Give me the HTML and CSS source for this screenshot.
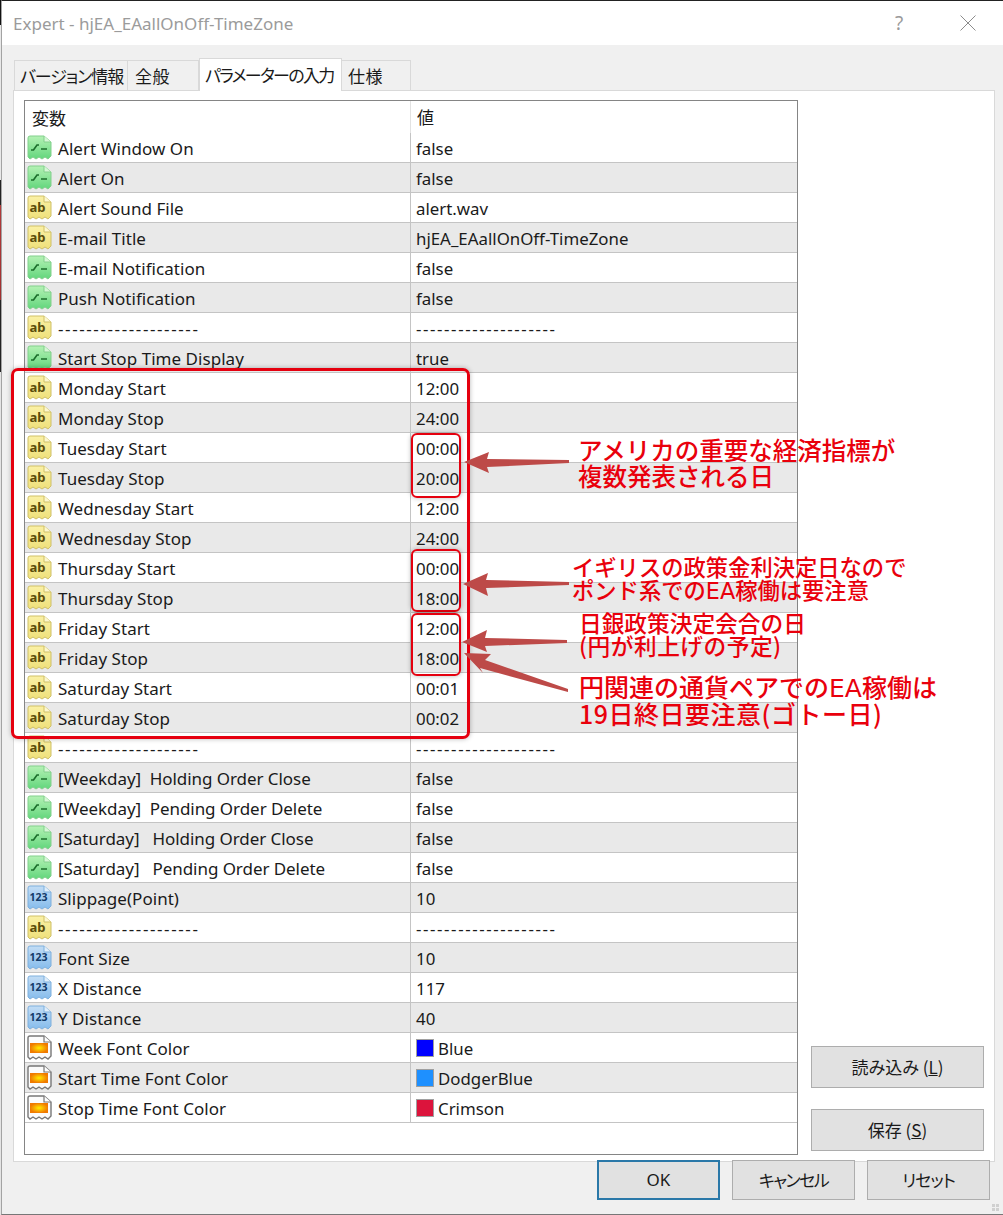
FILE: index.html
```html
<!DOCTYPE html>
<html lang="ja">
<head>
<meta charset="utf-8">
<title>Expert - hjEA_EAallOnOff-TimeZone</title>
<link rel="stylesheet" href="styles.css">
</head>
<body>
<svg class="defs" width="0" height="0" aria-hidden="true">
  <defs>
    <linearGradient id="g-green" x1="0" y1="0" x2="0" y2="1"><stop offset="0" stop-color="#b5f2b5"/><stop offset="1" stop-color="#62d67c"/></linearGradient>
    <linearGradient id="g-yellow" x1="0" y1="0" x2="0" y2="1"><stop offset="0" stop-color="#fbf1a6"/><stop offset="1" stop-color="#efe07a"/></linearGradient>
    <linearGradient id="g-blue" x1="0" y1="0" x2="0" y2="1"><stop offset="0" stop-color="#c3ddf5"/><stop offset="1" stop-color="#86bcec"/></linearGradient>
    <radialGradient id="g-orange"><stop offset="0.1" stop-color="#ffe000"/><stop offset="1" stop-color="#f07a00"/></radialGradient>
    <symbol id="i-bool" viewBox="0 0 25 25">
      <path class="sheet-green" d="M1 3Q1 1 3 1H17L24 7V21L21 24 18 22 15 24 12 22 9 24 6 22 3 24 1 22Z"/>
      <path class="fold-green" d="M17 1V7H24"/>
      <path class="mark-green" d="M4 15H6.5L10 10H12M14 14H20"/>
    </symbol>
    <symbol id="i-text" viewBox="0 0 25 25">
      <path class="sheet-yellow" d="M1 3Q1 1 3 1H17L24 7V21L21 24 18 22 15 24 12 22 9 24 6 22 3 24 1 22Z"/>
      <path class="fold-yellow" d="M17 1V7H24"/>
      <text class="ico-ab" x="2.5" y="16.5">ab</text>
    </symbol>
    <symbol id="i-num" viewBox="0 0 25 25">
      <path class="sheet-blue" d="M1 3Q1 1 3 1H17L24 7V21L21 24 18 22 15 24 12 22 9 24 6 22 3 24 1 22Z"/>
      <path class="fold-blue" d="M17 1V7H24"/>
      <text class="ico-num" x="2.5" y="16">123</text>
    </symbol>
    <symbol id="i-color" viewBox="0 0 25 25">
      <path class="sheet-color" d="M1 3Q1 1 3 1H17L24 7V21L21 24 18 22 15 24 12 22 9 24 6 22 3 24 1 22Z"/>
      <path class="fold-color" d="M17 1V7H24"/>
      <rect class="mark-color" x="3" y="8" width="18" height="10"/>
    </symbol>
  </defs>
</svg>

<div class="edge"></div>
<main class="window">
  <header class="titlebar">
    <span class="title">Expert - hjEA_EAallOnOff-TimeZone</span>
    <span class="help">?</span>
    <svg class="close" width="16" height="16" viewBox="0 0 16 16"><path d="M0.5 0.5L15.5 15.5M15.5 0.5L0.5 15.5"/></svg>
  </header>

  <nav class="tabs">
    <span class="tab tab-version">バージョン情報</span>
    <span class="tab tab-general">全般</span>
    <span class="tab tab-active">パラメーターの入力</span>
    <span class="tab tab-spec">仕様</span>
  </nav>

  <section class="panel">
    <div class="list">
      <div class="list-head"><span class="head-name">変数</span><span class="head-val">値</span></div>
      <div class="row"><span class="name"><svg class="ico"><use href="#i-bool"/></svg>Alert Window On</span><span class="val">false</span></div>
      <div class="row"><span class="name"><svg class="ico"><use href="#i-bool"/></svg>Alert On</span><span class="val">false</span></div>
      <div class="row"><span class="name"><svg class="ico"><use href="#i-text"/></svg>Alert Sound File</span><span class="val">alert.wav</span></div>
      <div class="row"><span class="name"><svg class="ico"><use href="#i-text"/></svg>E-mail Title</span><span class="val">hjEA_EAallOnOff-TimeZone</span></div>
      <div class="row"><span class="name"><svg class="ico"><use href="#i-bool"/></svg>E-mail Notification</span><span class="val">false</span></div>
      <div class="row"><span class="name"><svg class="ico"><use href="#i-bool"/></svg>Push Notification</span><span class="val">false</span></div>
      <div class="row"><span class="name dash"><svg class="ico"><use href="#i-text"/></svg>--------------------</span><span class="val dash">--------------------</span></div>
      <div class="row"><span class="name"><svg class="ico"><use href="#i-bool"/></svg>Start Stop Time Display</span><span class="val">true</span></div>
      <div class="row"><span class="name"><svg class="ico"><use href="#i-text"/></svg>Monday Start</span><span class="val">12:00</span></div>
      <div class="row"><span class="name"><svg class="ico"><use href="#i-text"/></svg>Monday Stop</span><span class="val">24:00</span></div>
      <div class="row"><span class="name"><svg class="ico"><use href="#i-text"/></svg>Tuesday Start</span><span class="val">00:00</span></div>
      <div class="row"><span class="name"><svg class="ico"><use href="#i-text"/></svg>Tuesday Stop</span><span class="val">20:00</span></div>
      <div class="row"><span class="name"><svg class="ico"><use href="#i-text"/></svg>Wednesday Start</span><span class="val">12:00</span></div>
      <div class="row"><span class="name"><svg class="ico"><use href="#i-text"/></svg>Wednesday Stop</span><span class="val">24:00</span></div>
      <div class="row"><span class="name"><svg class="ico"><use href="#i-text"/></svg>Thursday Start</span><span class="val">00:00</span></div>
      <div class="row"><span class="name"><svg class="ico"><use href="#i-text"/></svg>Thursday Stop</span><span class="val">18:00</span></div>
      <div class="row"><span class="name"><svg class="ico"><use href="#i-text"/></svg>Friday Start</span><span class="val">12:00</span></div>
      <div class="row"><span class="name"><svg class="ico"><use href="#i-text"/></svg>Friday Stop</span><span class="val">18:00</span></div>
      <div class="row"><span class="name"><svg class="ico"><use href="#i-text"/></svg>Saturday Start</span><span class="val">00:01</span></div>
      <div class="row"><span class="name"><svg class="ico"><use href="#i-text"/></svg>Saturday Stop</span><span class="val">00:02</span></div>
      <div class="row"><span class="name dash"><svg class="ico"><use href="#i-text"/></svg>--------------------</span><span class="val dash">--------------------</span></div>
      <div class="row"><span class="name tight"><svg class="ico"><use href="#i-bool"/></svg>[Weekday]&nbsp; Holding Order Close</span><span class="val">false</span></div>
      <div class="row"><span class="name tight"><svg class="ico"><use href="#i-bool"/></svg>[Weekday]&nbsp; Pending Order Delete</span><span class="val">false</span></div>
      <div class="row"><span class="name tight"><svg class="ico"><use href="#i-bool"/></svg>[Saturday]&nbsp;&nbsp; Holding Order Close</span><span class="val">false</span></div>
      <div class="row"><span class="name tight"><svg class="ico"><use href="#i-bool"/></svg>[Saturday]&nbsp;&nbsp; Pending Order Delete</span><span class="val">false</span></div>
      <div class="row"><span class="name"><svg class="ico"><use href="#i-num"/></svg>Slippage(Point)</span><span class="val">10</span></div>
      <div class="row"><span class="name dash"><svg class="ico"><use href="#i-text"/></svg>--------------------</span><span class="val dash">--------------------</span></div>
      <div class="row"><span class="name"><svg class="ico"><use href="#i-num"/></svg>Font Size</span><span class="val">10</span></div>
      <div class="row"><span class="name"><svg class="ico"><use href="#i-num"/></svg>X Distance</span><span class="val">117</span></div>
      <div class="row"><span class="name"><svg class="ico"><use href="#i-num"/></svg>Y Distance</span><span class="val">40</span></div>
      <div class="row"><span class="name"><svg class="ico"><use href="#i-color"/></svg>Week Font Color</span><span class="val"><i class="swatch swatch-blue"></i>Blue</span></div>
      <div class="row"><span class="name"><svg class="ico"><use href="#i-color"/></svg>Start Time Font Color</span><span class="val"><i class="swatch swatch-dodger"></i>DodgerBlue</span></div>
      <div class="row"><span class="name"><svg class="ico"><use href="#i-color"/></svg>Stop Time Font Color</span><span class="val"><i class="swatch swatch-crimson"></i>Crimson</span></div>
    </div>
    <aside class="side">
      <button class="btn btn-side">読み込み (<u>L</u>)</button>
      <button class="btn btn-side">保存 (<u>S</u>)</button>
    </aside>
  </section>

  <footer class="footer">
    <button class="btn btn-foot btn-ok">OK</button>
    <button class="btn btn-foot btn-cancel">キャンセル</button>
    <button class="btn btn-foot btn-reset">リセット</button>
  </footer>
  <svg class="grip" width="8" height="8" viewBox="0 0 8 8"><path d="M0 0h3v3H0zM4 0h3v3H4zM0 4h3v3H0zM4 4h3v3H4z"/></svg>
</main>

<div class="box box-all"></div>
<div class="box box-tue"></div>
<div class="box box-thu"></div>
<div class="box box-fri"></div>

<svg class="arrows" width="1003" height="1215" viewBox="0 0 1003 1215">
  <path d="M464 462L489 452 487 459 569 460V463L487 467 489 473Z"/>
  <path d="M463 584L488 573 486 580 569 582V585L486 588 488 596Z"/>
  <path d="M462 642L487 630 485 638 567 640V643L485 646 487 652Z"/>
  <path d="M464 653L491 654 485 660 568 689V692L480 668 483 673Z"/>
</svg>

<p class="note note-1"><span>アメリカの重要な経済指標が</span><span>複数発表される日</span></p>
<p class="note note-2"><span>イギリスの政策金利決定日なので</span><span>ポンド系での<b class="ea">EA</b>稼働は要注意</span></p>
<p class="note note-3"><span>日銀政策決定会合の日</span><span class="spaced">(円が利上げの予定)</span></p>
<p class="note note-4"><span>円関連の通貨ペアでの<b class="ea">EA</b>稼働は</span><span class="spaced">19日終日要注意(ゴトー日)</span></p>
</body>
</html>
```

FILE: styles.css
```css
* { box-sizing: border-box; }

html, body {
  margin: 0;
  padding: 0;
}

body {
  position: relative;
  display: flex;
  width: 1003px;
  height: 1215px;
  overflow: hidden;
  background: #f0f0f0;
  font-family: "Noto Sans", "Noto Sans CJK JP", sans-serif;
  font-size: 17px;
  color: #1a1a1a;
}

.defs { position: absolute; }

.edge {
  flex: 0 0 1px;
  background: linear-gradient(to bottom,
    #111 0, #111 25px, #e8e8e8 25px, #e8e8e8 180px, #222 180px, #222 205px,
    #b03a3a 205px, #a03030 300px, #222 300px, #222 372px,
    #e4e4e4 372px, #e4e4e4 1215px);
}

.window {
  position: relative;
  flex: 1;
  display: flex;
  flex-direction: column;
  min-width: 0;
  border-left: 1px solid #a3a3a3;
  border-top: 1px solid #222;
  border-bottom: 1px solid #777;
}

.titlebar {
  position: relative;
  display: flex;
  align-items: center;
  flex: 0 0 44px;
  padding-left: 11px;
  background: #fff;
}

.title {
  font-size: 17px;
  color: #9b9b9b;
}

.help {
  position: absolute;
  left: 893px;
  top: 9px;
  font-size: 19px;
  color: #9a9a9a;
}

.close {
  position: absolute;
  left: 958px;
  top: 14px;
}

.close path {
  fill: none;
  stroke: #8c8c8c;
  stroke-width: 1;
}

.tabs {
  display: flex;
  align-items: flex-end;
  height: 45px;
  padding-left: 12px;
  font-family: "Noto Sans CJK JP", sans-serif;
  font-feature-settings: "palt";
  font-size: 17px;
  white-space: nowrap;
}

.tab {
  display: flex;
  align-items: center;
  height: 30px;
  padding-left: 6px;
  background: #f0f0f0;
  border: 1px solid #d9d9d9;
  border-bottom: 0;
}

.tab-version { width: 114px; padding-left: 5px; letter-spacing: -1.1px; }
.tab-general { width: 71px; border-left: 0; padding-left: 7px; letter-spacing: 0.6px; }
.tab-active {
  position: relative;
  width: 143px;
  height: 33px;
  margin-bottom: -1px;
  padding-bottom: 2px;
  padding-left: 5px;
  letter-spacing: -1.7px;
  background: #fff;
  border-left: 1px solid #d9d9d9;
  z-index: 1;
}
.tab-spec { width: 69px; border-left: 0; padding-left: 6px; letter-spacing: 0.6px; }

.panel {
  display: flex;
  width: 982px;
  height: 1072px;
  margin-left: 11px;
  padding: 9px 10px 6px;
  background: #fff;
  border: 1px solid #d9d9d9;
}

.list {
  display: flex;
  flex-direction: column;
  flex: 0 0 774px;
  border: 1px solid #858585;
}

.list-head {
  display: flex;
  flex: 0 0 32px;
  align-items: center;
  font-family: "Noto Sans CJK JP", sans-serif;
}

.head-name {
  width: 385px;
  padding-left: 7px;
}

.head-val {
  flex: 1;
  padding-left: 6px;
  line-height: 32px;
  border-left: 1px solid #e2e2e2;
}

.row {
  display: flex;
  flex: 0 0 30px;
  border-bottom: 1px solid #c4c4c4;
}

.row:nth-child(odd) { background: #e9e9e9; }

.name {
  display: flex;
  align-items: center;
  flex: 0 0 385px;
  padding-left: 2px;
  padding-top: 1px;
  letter-spacing: 0.04px;
  white-space: pre;
}

.ico {
  flex: 0 0 25px;
  width: 25px;
  height: 25px;
  margin-top: -1px;
  margin-right: 6px;
}

.val {
  display: flex;
  align-items: center;
  flex: 1;
  padding-left: 5px;
  padding-top: 1px;
  font-size: 16.85px;
  border-left: 1px solid #c4c4c4;
}

.name.dash, .val.dash { letter-spacing: 1.6px; }
.name.tight { letter-spacing: -0.06px; }

.swatch {
  flex: 0 0 18px;
  width: 18px;
  height: 18px;
  margin-right: 4px;
  border: 1px solid #a0a0a0;
}

.swatch-blue { background: #0000ff; }
.swatch-dodger { background: #1e90ff; }
.swatch-crimson { background: #dc143c; }

.sheet-green { fill: url(#g-green); stroke: #82cf8c; }
.fold-green { fill: #d6f7d6; stroke: #82cf8c; }
.mark-green { fill: none; stroke: #1c6e2c; stroke-width: 1.7; }

.sheet-yellow { fill: url(#g-yellow); stroke: #cfc069; }
.fold-yellow { fill: #fdf8cf; stroke: #cfc069; }
.ico-ab {
  font-family: "Noto Sans", sans-serif;
  font-size: 13px;
  font-weight: 700;
  letter-spacing: 0;
  fill: #5a4c0a;
}

.sheet-blue { fill: url(#g-blue); stroke: #7fb0dd; }
.fold-blue { fill: #e0eefa; stroke: #7fb0dd; }
.ico-num {
  font-family: "Noto Sans", sans-serif;
  font-size: 10.5px;
  font-weight: 700;
  letter-spacing: 0;
  fill: #123a68;
}

.sheet-color { fill: #fbfbfb; stroke: #777; stroke-width: 1.4; }
.fold-color { fill: #fff; stroke: #777; stroke-width: 1.2; }
.mark-color { fill: url(#g-orange); }

.side {
  display: flex;
  flex-direction: column;
  justify-content: flex-end;
  gap: 21px;
  flex: 0 0 173px;
  margin-left: 13px;
  padding-bottom: 4px;
}

.btn {
  font-family: "Noto Sans CJK JP", "Noto Sans", sans-serif;
  font-feature-settings: "palt";
  font-size: 17px;
  color: #1a1a1a;
  background: #e1e1e1;
  border: 1px solid #adadad;
  padding: 0 0 2px;
}

.btn-side { height: 42px; }

.footer {
  display: flex;
  justify-content: flex-end;
  gap: 12px;
  margin-top: -2px;
  padding-right: 13px;
  position: relative;
}

.btn-foot {
  width: 123px;
  height: 40px;
}

.btn-ok {
  font-family: "Noto Sans", sans-serif;
  border: 2px solid #2a78a8;
}

.btn-cancel { letter-spacing: -1.5px; }
.btn-reset { letter-spacing: -1px; }

.grip {
  position: absolute;
  right: 3px;
  bottom: 2px;
}

.grip path { fill: #d0d0d0; }

.box {
  position: absolute;
  border-style: solid;
  border-color: #e5000f;
  box-shadow: 0 0 5px rgba(0, 0, 0, 0.28);
  pointer-events: none;
}

.box-all { left: 11px; top: 368px; width: 459px; height: 371px; border-width: 3px; border-radius: 7px; }
.box-tue { left: 411px; top: 433px; width: 50px; height: 65px; border-width: 2px; border-radius: 6px; }
.box-thu { left: 411px; top: 549px; width: 50px; height: 63px; border-width: 2px; border-radius: 6px; }
.box-fri { left: 411px; top: 613px; width: 50px; height: 63px; border-width: 2px; border-radius: 6px; }

.arrows {
  position: absolute;
  left: 0;
  top: 0;
}

.arrows path { fill: #bd4a48; }

.note {
  position: absolute;
  margin: 0;
  font-family: "Noto Sans CJK JP", sans-serif;
  font-weight: 500;
  color: #e9000c;
  white-space: nowrap;
}

.note span { display: block; }
.ea { font-family: "DejaVu Sans", sans-serif; font-weight: 400; }
.spaced { letter-spacing: 0.5px; }

.note-1 { left: 578px; top: 437px; font-size: 24.5px; line-height: 26px; }
.note-2 { left: 572px; top: 555px; font-size: 22.3px; line-height: 22.5px; }
.note-3 { left: 579px; top: 611px; font-size: 22.7px; line-height: 23px; }
.note-4 { left: 579px; top: 674px; font-size: 25px; line-height: 25px; }
```
